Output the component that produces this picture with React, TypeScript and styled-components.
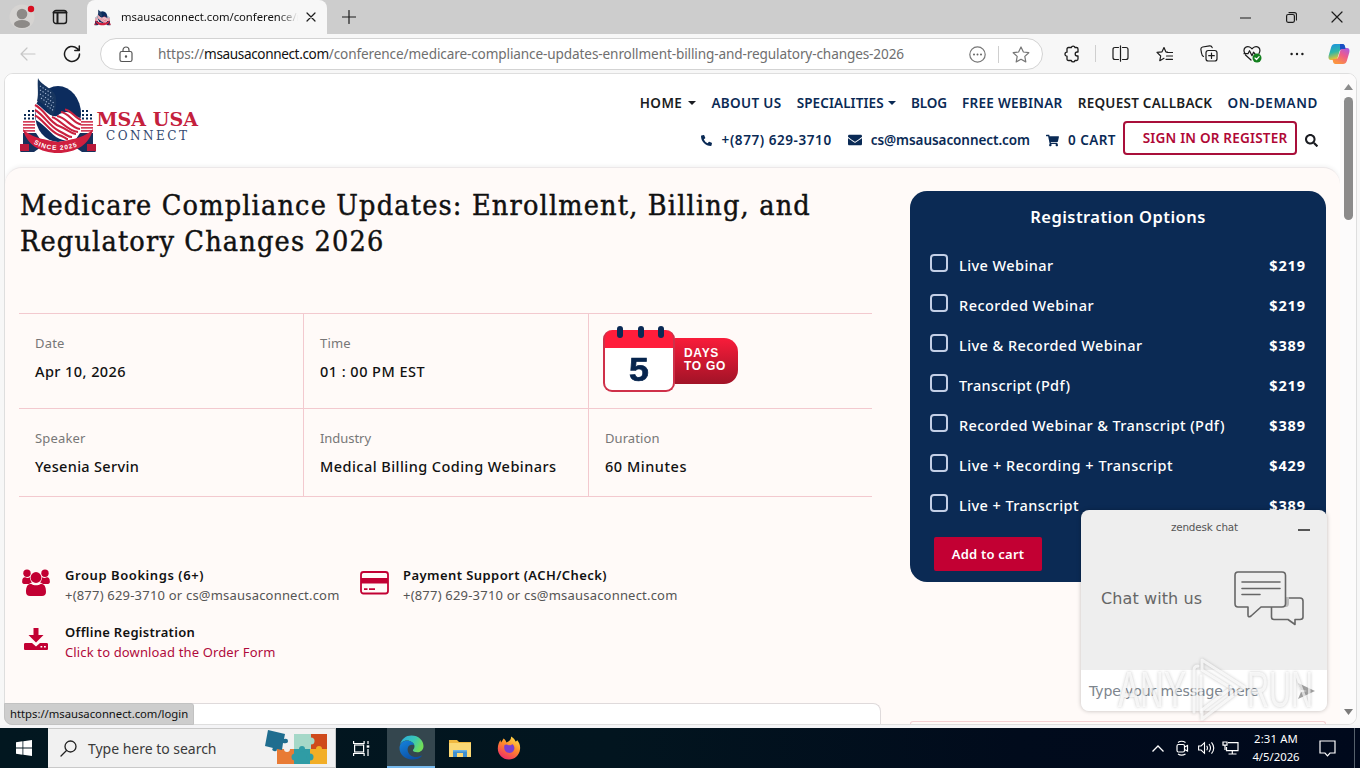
import React from "react";
import styled, { createGlobalStyle, css } from "styled-components";
import { FaPhoneAlt, FaEnvelope, FaShoppingCart, FaSearch } from "react-icons/fa";

const NAVY = "#0a2a55";
const RED = "#c20033";
const SANS = `"Noto Sans", "Open Sans", sans-serif`;

const GlobalStyle = createGlobalStyle`
  * { box-sizing: border-box; }
  body { margin: 0; overflow: hidden; font-family: ${SANS}; background: #f7f7f7; }
  svg { display: block; flex: none; }
`;

/* ---------- shared ---------- */
const Txt = styled.span<{ $ls?: number }>`
  white-space: pre;
  letter-spacing: ${(p) => p.$ls ?? 0}px;
`;

const Slot = styled.div<{ $w: number }>`
  width: ${(p) => p.$w}px;
  height: 100%;
  flex: none;
  display: flex;
  align-items: center;
  justify-content: center;
`;

const Desktop = styled.div`
  position: relative;
  width: 1360px;
  height: 768px;
  display: flex;
  flex-direction: column;
  overflow: hidden;
`;

/* ---------- browser chrome ---------- */
const TabStrip = styled.div`
  height: 34px;
  flex: none;
  display: flex;
  align-items: stretch;
  background: #cdcdcd;
`;
const TabActions = styled.div`
  width: 87px;
  display: flex;
  padding-left: 3px;
  border-bottom-right-radius: 8px;
`;
const Tab = styled.div`
  width: 240px;
  display: flex;
  align-items: center;
  padding-left: 7px;
  background: #f7f7f7;
  border-radius: 8px 8px 0 0;
`;
const TabTitle = styled.div`
  width: 179px;
  margin-left: 10px;
  overflow: hidden;
  font-size: 11.3px;
  line-height: 18px;
  color: #111;
  mask-image: linear-gradient(90deg, #000 88%, transparent 99%);
`;
const Spacer = styled.div`
  flex: 1;
`;
const Toolbar = styled.div`
  height: 39px;
  flex: none;
  display: flex;
  align-items: center;
  background: #f7f7f7;
`;
const AddressBar = styled.div`
  width: 943px;
  height: 32px;
  margin: 1px 6px 0 12px;
  display: flex;
  align-items: center;
  background: #fff;
  border: 1px solid #d3d3d3;
  border-radius: 16px;
`;
const Url = styled.div`
  flex: 1;
  padding-left: 7px;
  font-size: 13.6px;
  line-height: 20px;
  color: #6f6f6f;
  white-space: nowrap;
  b { font-weight: 400; color: #111; letter-spacing: -0.38px; }
`;
const Divider = styled.div`
  width: 1px;
  height: 17px;
  background: #cfcfcf;
`;
const Viewport = styled.div`
  position: relative;
  width: 1353px;
  height: 652px;
  margin-left: 4px;
  flex: none;
  display: flex;
  overflow: hidden;
  background: #fff;
  border: 1px solid #dedede;
  border-radius: 9px;
`;
const Gutter = styled.div`
  height: 3px;
  flex: none;
  background: #f4f4f6;
`;
const Page = styled.div`
  width: 1335px;
  height: 100%;
  overflow: hidden;
`;
const Scrollbar = styled.div`
  flex: 1;
  display: flex;
  flex-direction: column;
  align-items: center;
  justify-content: space-between;
  padding: 10px 0 9px;
  background: #fcfbfb;
`;
const Thumb = styled.div`
  width: 9px;
  height: 123px;
  margin-top: 7px;
  border-radius: 5px;
  background: #8b8b8b;
`;

/* ---------- site header ---------- */
const SiteHeader = styled.header`
  height: 93px;
  display: flex;
  justify-content: space-between;
  padding: 0 22px 0 10px;
  background: #fff;
`;
const Navs = styled.div`
  display: flex;
  flex-direction: column;
  align-items: flex-end;
  font-size: 13.5px;
  font-weight: 600;
  line-height: 20px;
  color: ${NAVY};
`;
const NavRow = styled.nav`
  display: flex;
  align-items: center;
  height: 20px;
  margin-top: 19px;
  gap: 15.2px;
`;
const NavItem = styled.a<{ $dark?: boolean; $gap?: number }>`
  display: flex;
  align-items: center;
  gap: ${(p) => p.$gap ?? 0}px;
  color: ${(p) => (p.$dark ? "#1b1d22" : NAVY)};
`;
const Caret = styled.i`
  border: 4px solid transparent;
  border-top-color: currentColor;
  border-bottom: 0;
`;
const UtilRow = styled.div`
  display: flex;
  align-items: center;
  height: 34px;
  margin-top: 8px;
  padding-right: 0;
`;
const Util = styled.div<{ $gap: number; $mr: number }>`
  display: flex;
  align-items: center;
  gap: ${(p) => p.$gap}px;
  margin-right: ${(p) => p.$mr}px;
  padding-top: 4px;
`;
const SignIn = styled.button`
  width: 174px;
  height: 34px;
  margin: 0 8px 0 0;
  padding: 0 0 0 10px;
  border: 2px solid #a90f3a;
  border-radius: 4px;
  background: #fff;
  color: #b00836;
  font: 600 13.5px/20px ${SANS};
`;

/* ---------- content ---------- */
const Body = styled.main`
  height: 557px;
  display: flex;
  justify-content: space-between;
  padding: 0 14px 0 14px;
  border-top: 1px solid #ece8e9;
  border-radius: 17px 17px 0 0;
  background: #fffaf8;
  box-shadow: 0 -1px 4px rgba(0, 0, 0, 0.06);
`;
const Left = styled.div`
  width: 862px;
  display: flex;
  flex-direction: column;
`;
const Title = styled.h1`
  margin: 20px 0 53px 1px;
  font: 400 28.5px/36px "DejaVu Serif Condensed", "DejaVu Serif", serif;
  letter-spacing: 1.17px;
  color: #111;
  -webkit-text-stroke: 0.45px #111;
`;
const Facts = styled.div`
  width: 853px;
  flex: none;
  display: grid;
  grid-template-columns: 285px 285px 283px;
  grid-template-rows: 95px 88px;
  border-bottom: 1px solid #f3c9cf;
`;
const Fact = styled.div<{ $last?: boolean }>`
  padding: 19px 0 0 16px;
  border-top: 1px solid #f3c9cf;
  ${(p) => !p.$last && css`border-right: 1px solid #f3c9cf;`}
`;
const FactLabel = styled.div`
  font-size: 13px;
  line-height: 20px;
  color: #777;
`;
const FactValue = styled.div`
  margin-top: 7px;
  font-size: 14.5px;
  line-height: 22px;
  font-weight: 500;
  color: #111;
`;
const Countdown = styled.div`
  display: flex;
  align-items: flex-start;
  margin: -7px 0 0 -2px;
`;
const Calendar = styled.div`
  width: 72px;
  height: 62px;
  margin-top: 4px;
  border: 2px solid #cf3049;
  border-top: 0;
  border-radius: 9px;
  background: linear-gradient(#ff1d3b 18px, #fff 18px);
  background-origin: border-box;
  overflow: visible;
`;
const Rings = styled.div`
  display: flex;
  justify-content: space-between;
  padding: 0 9px 0 12px;
  margin-top: -4px;
  height: 12px;
`;
const Ring = styled.i`
  width: 6px;
  height: 12px;
  border-radius: 3px;
  background: ${NAVY};
`;
const DayCount = styled.div`
  margin-top: 13px;
  text-align: center;
  font: 700 33px/38px "Liberation Sans", sans-serif;
  -webkit-text-stroke: 0.7px #06244d;
  color: #06244d;
  transform: scaleX(1.08);
`;
const Badge = styled.div`
  width: 63px;
  height: 46px;
  margin-top: 12px;
  padding: 9px 0 0 9px;
  border-radius: 0 14px 14px 0;
  background: linear-gradient(#f91c3a, #a11327);
  color: #fff;
  font: 700 12px/13px "Liberation Sans", sans-serif;
  letter-spacing: 0.7px;
`;
const Contacts = styled.div`
  display: grid;
  flex: none;
  grid-template-columns: 338px 400px;
  row-gap: 17px;
  margin: 68px 0 41px 1px;
`;
const Contact = styled.div`
  display: flex;
  height: 40px;
`;
const ContactIcon = styled.div`
  width: 45px;
  padding: 4px 0 0 2px;
`;
const ContactText = styled.div`
  font-size: 13px;
  line-height: 20px;
  color: #555;
  b { display: block; font-weight: 600; color: #111; }
  a { color: #b00a3c; }
`;
const NextCard = styled.div`
  flex: 1;
  margin-left: 1px;
  border: 1px solid #dfdadb;
  border-bottom: 0;
  border-radius: 8px 8px 0 0;
  background: #fff;
`;
const Right = styled.aside`
  width: 416px;
  display: flex;
  flex-direction: column;
  padding-top: 23px;
`;
const Panel = styled.div`
  height: 391px;
  flex: none;
  padding: 13px 20px 0;
  border-radius: 17px;
  background: #0b2a54;
  color: #fff;
`;
const PanelTitle = styled.h2`
  margin: 0 0 25px;
  text-align: center;
  font-size: 16.5px;
  line-height: 26px;
  font-weight: 600;
`;
const Option = styled.label`
  height: 40px;
  display: flex;
  font-size: 14.5px;
  line-height: 20px;
  font-weight: 500;
`;
const Box = styled.i`
  width: 18px;
  height: 18px;
  margin: -1px 11px 0 0;
  border: 2px solid #c3cfe6;
  border-radius: 4px;
`;
const Price = styled(Txt)`
  margin-left: auto;
  font-weight: 700;
`;
const CartButton = styled.button`
  width: 108px;
  height: 34px;
  margin: 2px 0 0 4px;
  padding: 0;
  border: 0;
  border-radius: 2px;
  background: ${RED};
  color: #fff;
  font: 600 13px/20px ${SANS};
`;
const NextPanel = styled.div`
  flex: 1;
  margin-top: 139px;
  border: 1px solid #f3cfd2;
  border-bottom: 0;
  border-radius: 12px 12px 0 0;
`;

/* ---------- overlays ---------- */
const StatusBubble = styled.div`
  position: absolute;
  left: 4px;
  top: 703px;
  width: 190px;
  height: 22px;
  padding-left: 5px;
  border-radius: 0 3px 0 8px;
  border: 1px solid #c2c2c2;
  background: #cdcdcd;
  font-size: 11.3px;
  line-height: 20px;
  color: #111;
`;
const Chat = styled.section`
  position: absolute;
  left: 1081px;
  top: 510px;
  width: 246px;
  height: 201px;
  display: flex;
  flex-direction: column;
  overflow: hidden;
  border-radius: 8px;
  background: #eee;
  box-shadow: 0 0 4px rgba(0, 0, 0, 0.25);
  font-family: "DejaVu Sans", sans-serif;
  color: #555;
`;
const ChatBar = styled.div`
  height: 34px;
  display: flex;
  align-items: center;
  justify-content: flex-end;
  font-size: 10.4px;
  padding: 0 17px 0 0;
  gap: 60px;
`;
const Minus = styled.i`
  width: 12px;
  height: 2px;
  margin-top: 5px;
  background: #555;
`;
const ChatMain = styled.div`
  height: 126px;
  display: flex;
  justify-content: space-between;
  padding: 27px 23px 0 20px;
  font-size: 16px;
  line-height: 56px;
  color: #666;
`;
const ChatInput = styled.div`
  flex: 1;
  display: flex;
  align-items: center;
  justify-content: space-between;
  padding: 0 12px 0 8px;
  background: #fff;
  font-size: 14px;
  color: #7d858d;
`;
const Watermark = styled.div`
  position: absolute;
  left: 1110px;
  top: 654px;
  opacity: 0.85;
  filter: drop-shadow(0 0 1.5px rgba(90, 90, 90, 0.5));
`;

/* ---------- taskbar ---------- */
const Taskbar = styled.div`
  height: 40px;
  flex: none;
  display: flex;
  background: linear-gradient(90deg, #021720 0, #02151f 45%, #010b1c 75%, #00091c 100%);
`;
const SearchBox = styled.div`
  width: 288px;
  display: flex;
  align-items: center;
  padding: 0 7px 0 12px;
  background: #f1f1f1;
  border: 1px solid #c9c9c9;
  border-left: 0;
  font-size: 14px;
  color: #3b3b3b;
`;
const SearchText = styled(Txt)`
  margin: 0 auto 0 11px;
`;
const AppTile = styled(Slot)<{ $active?: boolean }>`
  ${(p) =>
    p.$active &&
    css`
      background: #34464e;
      border-bottom: 2px solid #76b9ed;
    `}
`;
const Clock = styled.div`
  width: 68px;
  display: flex;
  flex-direction: column;
  align-items: center;
  padding-top: 2px;
  color: #fff;
  font-size: 11.3px;
  line-height: 18px;
`;
const ShowDesktop = styled.div`
  width: 6px;
  border-left: 1px solid #56616c;
`;

/* ---------- drawings ---------- */
const line = { fill: "none", stroke: "#1c1c1c", strokeWidth: 1.2, strokeLinecap: "round", strokeLinejoin: "round" } as const;

const Emblem = () => (
  <g>
    <g fill={NAVY}>
      {[10, 14, 18].map((x, i) =>
        [37, 41, 44.5].map((y, j) => (i + j > 0 ? <rect key={x + "-" + y} x={x - 1} y={y - 1} width="2" height="2" /> : null))
      )}
      {[68, 72, 76].map((x, i) =>
        [37, 41, 44.5].map((y, j) => (2 - i + j > 0 ? <rect key={x + "-" + y} x={x - 1} y={y - 1} width="2" height="2" /> : null))
      )}
    </g>
    <g fill="#d4405a">
      {[47, 50, 53, 56].map((y) => (
        <g key={y}>
          <rect x="8" y={y} width="12" height="1.7" />
          <rect x="66" y={y} width="12" height="1.7" />
        </g>
      ))}
    </g>
    <path d="M8 59h13l8 12-10 7H5l3-4z M78 59H65l-8 12 10 7h14l-3-4z" fill="#16305c" />
    <path d="M5 70h9v7H5z M72 70h9v7h-9z" fill="#b8193a" />
    <ellipse cx="43" cy="40" rx="23" ry="28" fill="#0c2c5e" />
    <path d="M20 29C28 33 34 44 42 42C54 32 60 44 66 44L65 57C60 58 58 67 48 66C38 64 32 52 21 46z" fill="#fff" />
    <g fill="none" stroke="#c9213f" strokeWidth="2.1">
      <path d="M20 31C30 36 34 48 44 52S56 60 61 60" />
      <path d="M20 36C29 41 34 52 44 57S53 63 57 63" />
      <path d="M20 41.500C28 45 34 57 44 61S50 65 53 65" />
      <path d="M42 42C52 44 56 54 65 55" />
      <path d="M46 38C54 39 58 49 66 50.500" />
      <path d="M50 35.500C56 36 60 44 66 46" />
      <path d="M37 43C46 46 52 57 63 58" />
    </g>
    <path d="M23 4C26 12 41 15 41 24C42 32 40 37 38 42C32 38 31 29 22 27C24 20 22 12 23 4z" fill="#17355f" />
    <path d="M25 12l11 7M25 16l13 8M25 20l14 9M26 24l13 9M30 30l9 7" stroke="#a9bbd8" strokeWidth="1.1" strokeDasharray="1.2 1.8" />
    <path d="M8 55C14 61 21 64.500 43 68C65 64.500 72 61 78 55C75 70 61 79 43 79S11 70 8 55z" fill="#cf1f3f" />
    <path id="sinceArc" d="M14 65.500C26 79.500 60 79.500 73 65" fill="none" />
  </g>
);

const Logo = () => (
  <svg width="190" height="88" viewBox="0 0 190 88">
    <Emblem />
    <text fontFamily="Liberation Sans, sans-serif" fontWeight="700" fontSize="6.5" fill="#fff" letterSpacing="1">
      <textPath href="#sinceArc" startOffset="6">SINCE 2025</textPath>
    </text>
    <text x="81.500" y="52" fontFamily="DejaVu Serif, serif" fontWeight="700" fontSize="18.200" textLength="101.500" lengthAdjust="spacingAndGlyphs" fill="#c4203c">
      MSA USA
    </text>
    <text x="91" y="66" fontFamily="DejaVu Serif, serif" fontSize="12" textLength="81" fill="#34496f">
      CONNECT
    </text>
  </svg>
);

const UsersIcon = () => (
  <svg width="28" height="28" viewBox="0 0 28 28" fill={RED}>
    <circle cx="5" cy="4.200" r="3.700" />
    <circle cx="23" cy="4.200" r="3.700" />
    <path d="M.2 12c0-3 1.500-4 3-3.800 1.700 1 3.600.8 4.700.1.300 2.700 1 4 2 5.200-1 .2-2 .7-2.800 1.500H2C.6 15-.1 13.800.2 12z" />
    <path d="M27.800 12c0-3-1.500-4-3-3.800-1.700 1-3.600.8-4.700.1-.3 2.700-1 4-2 5.200 1 .2 2 .7 2.800 1.500H26c1.400 0 2.100-1.200 1.800-3z" />
    <circle cx="14" cy="8.500" r="5.400" />
    <path d="M4 23c0-5 1.500-8 5-8.200 3 2 7 2 10 0 3.500.2 5 3.200 5 8.200 0 2.600-1.500 4-4 4H8c-2.500 0-4-1.400-4-4z" />
  </svg>
);
const CardIcon = () => (
  <svg width="29" height="26" viewBox="0 0 29 26">
    <rect x="1" y="3" width="27" height="21.500" rx="2.500" fill="none" stroke={RED} strokeWidth="1.800" />
    <path d="M1 9h27v5.500H1z" fill={RED} />
    <path d="M4 20.200h3.500M9 20.200h6" stroke={RED} strokeWidth="1.700" />
  </svg>
);
const DownloadIcon = () => (
  <svg width="28" height="26" viewBox="0 0 28 26" fill={RED}>
    <path d="M11.500 2h5v7h5L14 16.500 6.500 9h5z" />
    <path d="M3.500 17h6.500l4 3.500 4-3.500h6.500c1 0 1.500.5 1.500 1.500v4c0 1-.5 1.500-1.500 1.500h-21c-1 0-1.500-.5-1.500-1.500v-4c0-1 .5-1.500 1.500-1.500z" />
    <path d="M18.500 20.700h1.800M22 20.700h1.800" stroke="#fff" strokeWidth="1.500" />
  </svg>
);
const ChatBubbles = () => (
  <svg width="70" height="56" viewBox="0 0 70 56" fill="none" stroke="#666" strokeWidth="1.600" strokeLinejoin="round" strokeLinecap="round">
    <path d="M41 27h25q3 0 3 3v16q0 2.500-3 2.500h-5v5l-7-5H40q-2.500 0-2.500-2.500V32z" />
    <path d="M38 36h14q3 0 3-4v-6h-4v9z" fill="#bbb" stroke="none" />
    <path d="M4 1h44q3.500 0 3.500 3.500v28q0 3.500-3.500 3.500H27l-10 9q-3 2-3-1v-8H4q-3 0-3-3.500v-28Q1 1 4 1z" fill="#eee" />
    <path d="M8 11h38M8 17.500h38M8 23.500h18" />
  </svg>
);
const Puzzle = () => (
  <svg width="63" height="38" viewBox="0 0 63 38">
    <rect x="29" y="5" width="18" height="17" fill="#a5d8c8" />
    <rect x="46" y="5" width="16" height="17" fill="#cf4a1c" />
    <rect x="12" y="20" width="20" height="15" fill="#e87b35" />
    <rect x="29" y="20" width="18" height="15" fill="#2f9ca5" />
    <rect x="45" y="20" width="17" height="15" fill="#f2ae27" />
    <circle cx="46" cy="12" r="3.500" fill="#a5d8c8" />
    <circle cx="30" cy="28" r="3.500" fill="#2f9ca5" />
    <circle cx="45" cy="28" r="3.500" fill="#2f9ca5" />
    <circle cx="37" cy="20" r="3" fill="#2f9ca5" />
    <circle cx="54" cy="20" r="3" fill="#f2ae27" />
    <path d="M3 1l17 4-1 5q4-1 4 2t-5 2l-1 7-5-1q0 3-3 2t-1-3l-8-2z" fill="#1f6d8f" />
    <circle cx="22" cy="20" r="3" fill="#f1f1f1" />
  </svg>
);
const Edge = () => (
  <svg width="25" height="25" viewBox="0 0 25 25">
    <defs>
      <linearGradient id="eg" x1="0" y1="0" x2="1" y2=".4">
        <stop offset="0" stopColor="#2aa8e0" />
        <stop offset=".6" stopColor="#38c6b8" />
        <stop offset="1" stopColor="#6fdc5a" />
      </linearGradient>
      <linearGradient id="eb" x1="0" y1="0" x2=".6" y2="1">
        <stop offset="0" stopColor="#1583dc" />
        <stop offset="1" stopColor="#0c4fa3" />
      </linearGradient>
    </defs>
    <path d="M.8 10C2.500 3.800 7 .5 12.500.5 19.500.5 24.500 5.500 24.500 11c0 4-3 6.300-6.300 6.300-2.700 0-4.300-1-4.300-2 0-.8 1.600-1.300 1.600-4C15.500 8 11.500 5.500 8 5.500 4 5.500 1.500 8 .8 10z" fill="url(#eg)" />
    <path d="M.5 12.500C1 8 4 5.700 8 5.700c3.500 0 6.500 1.800 7.200 4.300-5-1.500-7 2-6.500 5.500.5 4 4.500 7 9 6.500 2-.2 3.500-.9 4.500-1.400.4-.2.7.2.4.6C20.500 23.500 17 24.700 13 24.500 6 24.300.2 19.500.5 12.500z" fill="url(#eb)" />
  </svg>
);
const Explorer = () => (
  <svg width="22" height="19" viewBox="0 0 22 19">
    <path d="M0 1h8l2 2h12v15H0z" fill="#f0b840" />
    <path d="M0 4h22v14H0z" fill="#fbd874" />
    <path d="M4 18v-7h14v7h-4v-4H8v4z" fill="#3e8fd0" />
    <path d="M4 11h14v1.500H4z" fill="#69b0e4" />
  </svg>
);
const Firefox = () => (
  <svg width="24" height="24" viewBox="0 0 24 24">
    <defs>
      <linearGradient id="ff" x1=".8" y1="0" x2=".25" y2="1">
        <stop offset="0" stopColor="#ffe14a" />
        <stop offset=".45" stopColor="#ff8a2a" />
        <stop offset="1" stopColor="#f0286a" />
      </linearGradient>
    </defs>
    <path d="M14 .5c3 1.500 4 3.500 4.500 5 1-.1 1.500-.8 1.500-1.500 2.500 2.500 3.500 6 3 9.500C22.300 19.500 17.500 23.500 12 23.500 5.500 23.500.8 18.500.8 12.500.8 9 2 6 3.500 4l.5 2.500C5 5.300 6 4 6.500 2.500 8 3.500 9 5 9.500 6.500 11.500 5.500 14.500 4.500 14 .5z" fill="url(#ff)" />
    <path d="M7.500 9c1.500-1 3-.5 4 .3 2 0 3 .3 3.500-1.300C17.500 9.500 17.800 12 17 14c-1 2.300-3.500 3.400-6 2.800C7.800 16 6.500 12.500 7.500 9z" fill="#7b3ed0" />
  </svg>
);
const Copilot = () => (
  <svg width="22" height="22" viewBox="0 0 22 22">
    <defs>
      <linearGradient id="c1" x1="0" y1="0" x2=".3" y2="1">
        <stop offset="0" stopColor="#1a8fe6" />
        <stop offset=".55" stopColor="#2fb7a8" />
        <stop offset="1" stopColor="#f6c42c" />
      </linearGradient>
      <linearGradient id="c2" x1="1" y1="0" x2=".4" y2="1">
        <stop offset="0" stopColor="#a35bea" />
        <stop offset=".5" stopColor="#ee5b8b" />
        <stop offset="1" stopColor="#fb9440" />
      </linearGradient>
    </defs>
    <path d="M7 1h7.500c1.500 0 2 1 2.500 2.500L17.500 6H14c-1.500 0-2 1-2.500 2.500L9.500 15c-.4 1.300-1 2-2.500 2H3C.8 17 0 15 .7 12.500l2.500-8.500C3.800 2 5 1 7 1z" fill="url(#c1)" />
    <path d="M15 21H7.500C6 21 5.300 20 5 18.500L4.500 16H8c1.500 0 2-1 2.500-2.500L12.500 7c.4-1.300 1-2 2.500-2h4c2.200 0 3 2 2.300 4.500l-2.500 8.500C18.200 20 17 21 15 21z" fill="url(#c2)" />
    <path d="M12 1h2.500c1.500 0 2 1 2.500 2.500L17.500 6H14c-1 0-1.600.5-2 1.300z" fill="#1b4fc4" />
  </svg>
);

/* ---------- data ---------- */
const options: [string, string, number][] = [
  ["Live Webinar", "$219", 0.42],
  ["Recorded Webinar", "$219", 0.47],
  ["Live & Recorded Webinar", "$389", 0.44],
  ["Transcript (Pdf)", "$219", 0.35],
  ["Recorded Webinar & Transcript (Pdf)", "$389", 0.41],
  ["Live + Recording + Transcript", "$429", 0.52],
  ["Live + Transcript", "$389", 0.42],
];
const contactLine = "+(877) 629-3710 or cs@msausaconnect.com";

export default function App() {
  return (
    <Desktop>
      <GlobalStyle />
      <TabStrip>
        <TabActions>
          <Slot $w={38}>
            <svg width="26" height="26" viewBox="0 0 26 26">
              <circle cx="13" cy="13" r="12.500" fill="#d6d4d2" />
              <circle cx="13" cy="10" r="5.300" fill="#8d8a87" />
              <ellipse cx="13" cy="20" rx="8" ry="4" fill="#8d8a87" />
              <circle cx="22" cy="5" r="3.200" fill="#d80e20" />
            </svg>
          </Slot>
          <Slot $w={38}>
            <svg width="16" height="16" viewBox="0 0 16 16" {...line} strokeWidth={1.4}>
              <rect x="1.500" y="1.500" width="13" height="13" rx="2.500" />
              <path d="M1.500 3.500h13M5.500 4v10" strokeWidth="2" />
            </svg>
          </Slot>
        </TabActions>
        <Tab>
          <svg width="17" height="17" viewBox="3 2 80 80">
            <Emblem />
          </svg>
          <TabTitle>
            <Txt $ls={-0.03}>msausaconnect.com/conference/m</Txt>
          </TabTitle>
          <Slot $w={22}>
            <svg width="10" height="10" viewBox="0 0 10 10" {...line}>
              <path d="M1 1l8 8M9 1l-8 8" />
            </svg>
          </Slot>
        </Tab>
        <Slot $w={43}>
          <svg width="14" height="14" viewBox="0 0 14 14" {...line}>
            <path d="M7 .5v13M.5 7h13" />
          </svg>
        </Slot>
        <Spacer />
        <Slot $w={46}>
          <svg width="11" height="11" viewBox="0 0 11 11" {...line}>
            <path d="M.5 6h10" />
          </svg>
        </Slot>
        <Slot $w={46}>
          <svg width="11" height="11" viewBox="0 0 11 11" {...line}>
            <rect x=".6" y="2.500" width="7.800" height="7.800" rx="1.500" />
            <path d="M3 .6h5.500q2 0 2 2V8" />
          </svg>
        </Slot>
        <Slot $w={46}>
          <svg width="12" height="12" viewBox="0 0 12 12" {...line}>
            <path d="M1 1l10 10M11 1L1 11" />
          </svg>
        </Slot>
      </TabStrip>

      <Toolbar>
        <Slot $w={56}>
          <svg width="16" height="14" viewBox="0 0 16 14" {...line} stroke="#c6c6c6">
            <path d="M15 7H1M7 1L1 7l6 6" />
          </svg>
        </Slot>
        <Slot $w={32}>
          <svg width="18" height="18" viewBox="0 0 18 18" {...line} strokeWidth={1.5}>
            <path d="M16.500 9A7.500 7.500 0 1 1 14 3.400L16 5.300M16.300 1v4.500h-4.500" />
          </svg>
        </Slot>
        <AddressBar>
          <Slot $w={50}>
            <svg width="14" height="17" viewBox="0 0 14 17" {...line} stroke="#555">
              <rect x="1" y="5.500" width="12" height="10" rx="1.800" />
              <path d="M4 5.500V4a3 3 0 0 1 6 0v1.500" />
              <circle cx="7" cy="10.500" r=".6" fill="#555" />
            </svg>
          </Slot>
          <Url>
            <Txt $ls={-0.1}>https://</Txt>
            <b>msausaconnect.com</b>
            <Txt $ls={-0.12}>/conference/medicare-compliance-updates-enrollment-billing-and-regulatory-changes-2026</Txt>
          </Url>
          <Slot $w={42}>
            <svg width="17" height="17" viewBox="0 0 17 17" {...line} stroke="#777">
              <circle cx="8.500" cy="8.500" r="7.700" />
              <g fill="#666" stroke="none">
                <circle cx="5" cy="8.500" r="1" />
                <circle cx="8.500" cy="8.500" r="1" />
                <circle cx="12" cy="8.500" r="1" />
              </g>
            </svg>
          </Slot>
          <Divider />
          <Slot $w={43}>
            <svg width="18" height="17" viewBox="0 0 18 17" {...line} stroke="#777">
              <path d="M9 1l2.400 5 5.400.7-4 3.700 1 5.500L9 13.300l-4.800 2.600 1-5.500-4-3.700L6.600 6z" />
            </svg>
          </Slot>
        </AddressBar>
        <Slot $w={46}>
          <svg width="16" height="18" viewBox="0 0 16 18" {...line} strokeWidth={1.3}>
            <path d="M4.500 2.500h2.800a1.900 1.900 0 0 1 3.700 0h1.500q1.500 0 1.500 1.500v3h-.8a1.900 1.900 0 0 0 0 4h.8v3q0 1.500-1.500 1.500H11a1.900 1.900 0 0 1-3.700 0H4.500Q3 15.500 3 14v-2.800a2 2 0 0 1 0-4V4q0-1.500 1.500-1.500z" />
          </svg>
        </Slot>
        <Divider />
        <Slot $w={48}>
          <svg width="17" height="17" viewBox="0 0 17 17" {...line}>
            <path d="M6.500 2.500H3Q1 2.500 1 4.500v8q0 2 2 2h3.500M10.500 2.500H14q2 0 2 2v8q0 2-2 2h-3.500M8.500.8v15.400" />
          </svg>
        </Slot>
        <Slot $w={41}>
          <svg width="17" height="16" viewBox="0 0 17 16" {...line}>
            <path d="M11.500 6L9.800 5.800 8 1.500 6 5.800l-5 .6L4.700 10l-.9 4.700L8 12.300M11 6.500h5.500M10.500 10h6M10 13.300h6.500" />
          </svg>
        </Slot>
        <Slot $w={47}>
          <svg width="18" height="17" viewBox="0 0 18 17" {...line}>
            <rect x="6" y="5.500" width="11" height="10.500" rx="2.300" />
            <path d="M11.500 8v5.500M8.700 10.700h5.600M3.500 11.500Q2 11 1.500 8L.9 4.500Q.7 2.500 2.600 2l7-1.200q2-.2 2.600 1.800" />
          </svg>
        </Slot>
        <Slot $w={41}>
          <svg width="19" height="18" viewBox="0 0 19 18" {...line}>
            <path d="M2 8.500Q-.2 5 2.300 2.500q3-2.300 6 .7l.7.7.7-.7q3-3 6-.7Q18 5 16 8.500M2.500 10l5.500 5M1 8.700h4l1.500-3 2.500 5 1.500-3.500L12 9" />
            <circle cx="14" cy="13" r="4.500" fill="#13801e" stroke="none" />
            <path d="M12 13l1.500 1.500 2.600-2.800" stroke="#fff" />
          </svg>
        </Slot>
        <Slot $w={47}>
          <svg width="14" height="4" viewBox="0 0 14 4" fill="#1c1c1c">
            <circle cx="1.600" cy="2" r="1.200" />
            <circle cx="7" cy="2" r="1.200" />
            <circle cx="12.400" cy="2" r="1.200" />
          </svg>
        </Slot>
        <Slot $w={38}>
          <Copilot />
        </Slot>
      </Toolbar>

      <Viewport>
        <Page>
          <SiteHeader>
            <Logo />
            <Navs>
              <NavRow>
                <NavItem $dark $gap={6}><Txt $ls={0.4}>HOME</Txt><Caret /></NavItem>
                <NavItem><Txt $ls={0.33}>ABOUT US</Txt></NavItem>
                <NavItem $gap={4}><Txt $ls={0.09}>SPECIALITIES</Txt><Caret /></NavItem>
                <NavItem><Txt $ls={-0.11}>BLOG</Txt></NavItem>
                <NavItem><Txt $ls={0.27}>FREE WEBINAR</Txt></NavItem>
                <NavItem $dark><Txt $ls={0.25}>REQUEST CALLBACK</Txt></NavItem>
                <NavItem><Txt $ls={0.58}>ON-DEMAND</Txt></NavItem>
              </NavRow>
              <UtilRow>
                <Util $gap={10} $mr={16}><FaPhoneAlt size={11} /><Txt $ls={0.57}>+(877) 629-3710</Txt></Util>
                <Util $gap={9} $mr={16}><FaEnvelope size={14} /><Txt $ls={-0.06}>cs@msausaconnect.com</Txt></Util>
                <Util $gap={9} $mr={7}><FaShoppingCart size={13} /><Txt $ls={0.45}>0 CART</Txt></Util>
                <SignIn><Txt $ls={0.2}>SIGN IN OR REGISTER</Txt></SignIn>
                <Util $gap={0} $mr={0}><FaSearch size={13} color="#1b1d22" /></Util>
              </UtilRow>
            </Navs>
          </SiteHeader>
          <Body>
            <Left>
              <Title>
                Medicare Compliance Updates: Enrollment, Billing, and
                <br />
                Regulatory Changes 2026
              </Title>
              <Facts>
                <Fact>
                  <FactLabel><Txt $ls={0.2}>Date</Txt></FactLabel>
                  <FactValue><Txt $ls={0.43}>Apr 10, 2026</Txt></FactValue>
                </Fact>
                <Fact>
                  <FactLabel><Txt $ls={0.2}>Time</Txt></FactLabel>
                  <FactValue><Txt $ls={0.46}>01 : 00 PM EST</Txt></FactValue>
                </Fact>
                <Fact $last>
                  <Countdown>
                    <Calendar>
                      <Rings><Ring /><Ring /><Ring /></Rings>
                      <DayCount>5</DayCount>
                    </Calendar>
                    <Badge>DAYS<br />TO GO</Badge>
                  </Countdown>
                </Fact>
                <Fact>
                  <FactLabel><Txt $ls={0.16}>Speaker</Txt></FactLabel>
                  <FactValue><Txt $ls={0.32}>Yesenia Servin</Txt></FactValue>
                </Fact>
                <Fact>
                  <FactLabel><Txt $ls={-0.05}>Industry</Txt></FactLabel>
                  <FactValue><Txt $ls={0.45}>Medical Billing Coding Webinars</Txt></FactValue>
                </Fact>
                <Fact $last>
                  <FactLabel><Txt $ls={0.08}>Duration</Txt></FactLabel>
                  <FactValue><Txt $ls={0.53}>60 Minutes</Txt></FactValue>
                </Fact>
              </Facts>
              <Contacts>
                <Contact>
                  <ContactIcon><UsersIcon /></ContactIcon>
                  <ContactText>
                    <b><Txt $ls={0.57}>Group Bookings (6+)</Txt></b>
                    <Txt $ls={0.2}>{contactLine}</Txt>
                  </ContactText>
                </Contact>
                <Contact>
                  <ContactIcon><CardIcon /></ContactIcon>
                  <ContactText>
                    <b><Txt $ls={0.43}>Payment Support (ACH/Check)</Txt></b>
                    <Txt $ls={0.2}>{contactLine}</Txt>
                  </ContactText>
                </Contact>
                <Contact>
                  <ContactIcon><DownloadIcon /></ContactIcon>
                  <ContactText>
                    <b><Txt $ls={0.29}>Offline Registration</Txt></b>
                    <a><Txt $ls={0.14}>Click to download the Order Form</Txt></a>
                  </ContactText>
                </Contact>
              </Contacts>
              <NextCard />
            </Left>
            <Right>
              <Panel>
                <PanelTitle><Txt $ls={0.45}>Registration Options</Txt></PanelTitle>
                {options.map(([name, price, ls]) => (
                  <Option key={name}>
                    <Box />
                    <Txt $ls={ls}>{name}</Txt>
                    <Price $ls={0.9}>{price}</Price>
                  </Option>
                ))}
                <CartButton><Txt $ls={0.22}>Add to cart</Txt></CartButton>
              </Panel>
              <NextPanel />
            </Right>
          </Body>
        </Page>
        <Scrollbar>
          <div>
            <svg width="9" height="6" viewBox="0 0 9 6" fill="#8b8b8b"><path d="M4.500 0L9 6H0z" /></svg>
            <ThumbWrap><Thumb /></ThumbWrap>
          </div>
          <svg width="9" height="6" viewBox="0 0 9 6" fill="#7b7b7b"><path d="M4.500 6L9 0H0z" /></svg>
        </Scrollbar>
      </Viewport>
      <Gutter />

      <Taskbar>
        <Slot $w={48}>
          <svg width="16" height="16" viewBox="0 0 16 16" fill="#fff">
            <path d="M0 2.200l6.500-.9v6.300H0zM7.300 1.200L16 0v7.600H7.300zM0 8.400h6.500v6.300L0 13.800zM7.300 8.400H16V16l-8.700-1.200z" />
          </svg>
        </Slot>
        <SearchBox>
          <svg width="17" height="17" viewBox="0 0 17 17" {...line} stroke="#222" strokeWidth={1.3}>
            <circle cx="10.500" cy="6.500" r="5.500" />
            <path d="M6.500 10.500L1 16" />
          </svg>
          <SearchText $ls={-0.02}>Type here to search</SearchText>
          <Puzzle />
        </SearchBox>
        <Slot $w={51}>
          <svg width="17" height="17" viewBox="0 0 17 17" fill="none" stroke="#fff" strokeWidth="1.200">
            <path d="M.6 1v2.500h10.500V1M.6 16v-2.500h10.500V16" />
            <rect x="1.600" y="5" width="9" height="7" />
            <path d="M15 1v3M15 9v7" />
            <path d="M13.700 6.500h2.600" strokeWidth="2.400" />
          </svg>
        </Slot>
        <AppTile $w={48} $active><Edge /></AppTile>
        <AppTile $w={49}><Explorer /></AppTile>
        <AppTile $w={49}><Firefox /></AppTile>
        <Spacer />
        <Slot $w={24}>
          <svg width="12" height="7" viewBox="0 0 12 7" fill="none" stroke="#fff" strokeWidth="1.300"><path d="M.5 6.500L6 1l5.500 5.500" /></svg>
        </Slot>
        <Slot $w={24}>
          <svg width="13" height="16" viewBox="0 0 13 16" fill="none" stroke="#fff" strokeWidth="1.200">
            <rect x="1" y="4.500" width="7.500" height="7.500" rx="1.500" />
            <path d="M8.500 7l3-1.500v5.500l-3-1.500M2 2.500Q5.500 0 9.500 2.500M2 14Q5.500 16.300 9.500 14" />
          </svg>
        </Slot>
        <Slot $w={24}>
          <svg width="17" height="14" viewBox="0 0 17 14" fill="none" stroke="#fff" strokeWidth="1.100">
            <path d="M.6 5h2.500L6.500 1.700v10.600L3.100 9H.6zM8.700 4.800q1.500 2.200 0 4.400M11 3q3 4 0 8M13.500 1.300q4.500 5.700 0 11.400" />
          </svg>
        </Slot>
        <Slot $w={24}>
          <svg width="17" height="14" viewBox="0 0 17 14" fill="none" stroke="#fff" strokeWidth="1.200">
            <path d="M6 1.600h10v8H4.500V6M10.300 9.600V13M6.500 13h8" />
            <path d="M1 1h4v3.200H1zM3 4.200V9" />
          </svg>
        </Slot>
        <Clock>
          <Txt $ls={0.15}>2:31 AM</Txt>
          <Txt>4/5/2026</Txt>
        </Clock>
        <Slot $w={35}>
          <svg width="17" height="17" viewBox="0 0 17 17" fill="none" stroke="#fff" strokeWidth="1.200">
            <path d="M1 1h15v12H11l-2.500 2.800L6 13H1z" />
          </svg>
        </Slot>
        <Slot $w={9} />
        <ShowDesktop />
      </Taskbar>

      <StatusBubble><Txt $ls={-0.02}>https://msausaconnect.com/login</Txt></StatusBubble>

      <Chat>
        <ChatBar>
          <Txt $ls={-0.15}>zendesk chat</Txt>
          <Minus />
        </ChatBar>
        <ChatMain>
          <Txt $ls={0.1}>Chat with us</Txt>
          <ChatBubbles />
        </ChatMain>
        <ChatInput>
          <Txt $ls={-0.1}>Type your message here</Txt>
          <svg width="17" height="16" viewBox="0 0 17 16" fill="#a2a2a2"><path d="M0 0l17 8-17 8 3-7 6-1-6-1z" /></svg>
        </ChatInput>
      </Chat>

      <Watermark>
        <svg width="210" height="72" viewBox="0 0 210 72" fill="none">
          <g fontFamily="Liberation Sans, sans-serif" fontSize="50" fill="#fff" fillOpacity=".75">
            <text x="8" y="53" textLength="68" lengthAdjust="spacingAndGlyphs">ANY</text>
            <text x="137" y="53" textLength="66" lengthAdjust="spacingAndGlyphs">RUN</text>
          </g>
          <g stroke="#fff" strokeWidth="3" strokeOpacity=".8" strokeLinejoin="round" strokeLinecap="round">
            <path d="M92 6l42 27-42 32V56l29-22-29-18z" />
            <path d="M84 58V16q0-4 4-4M91 22v36" />
          </g>
        </svg>
      </Watermark>
    </Desktop>
  );
}

const ThumbWrap = styled.div`
  display: flex;
  justify-content: center;
`;
